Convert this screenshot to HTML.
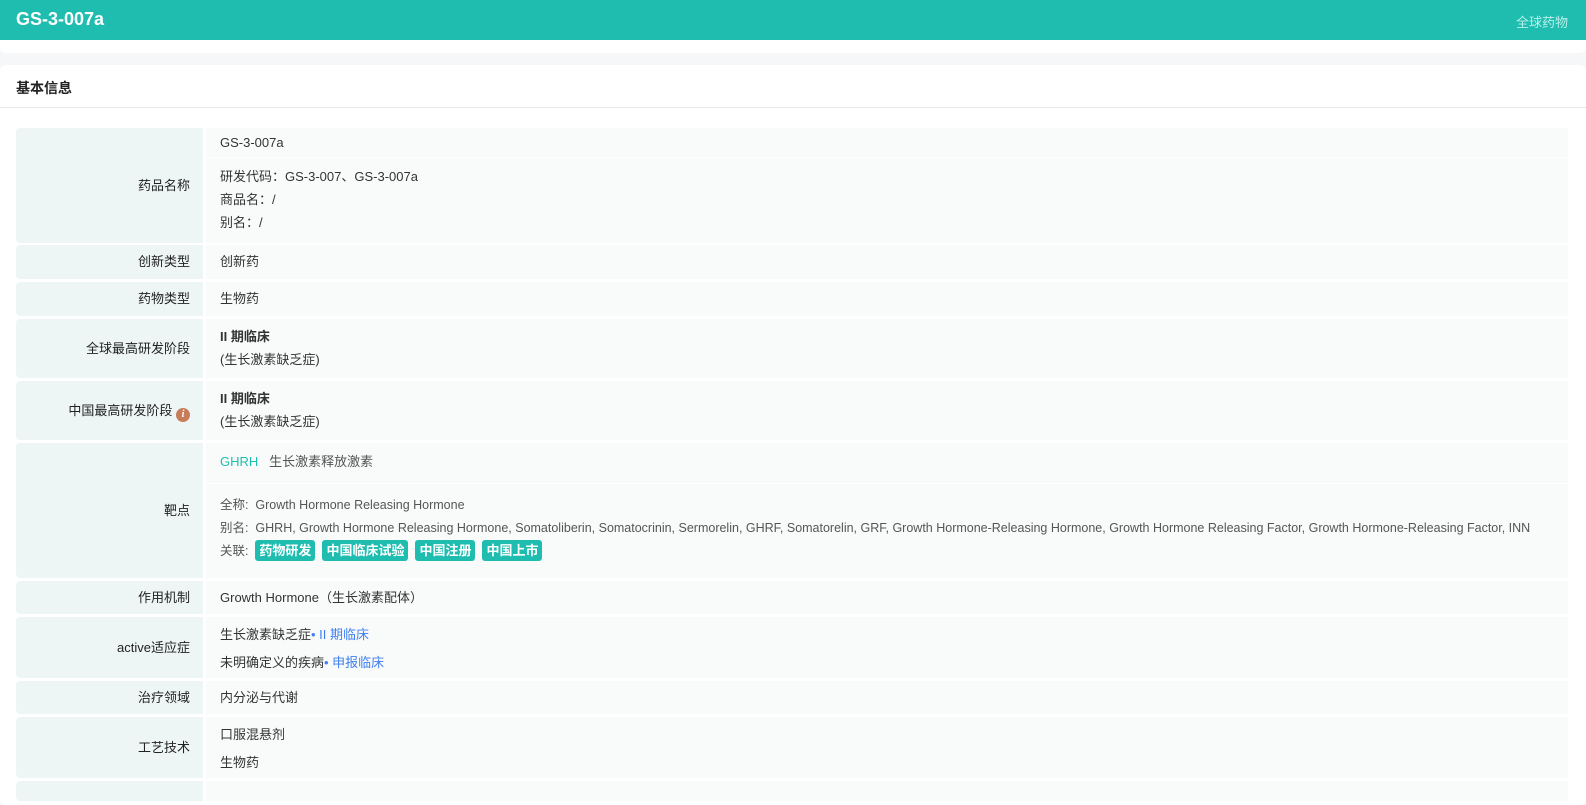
<!DOCTYPE html>
<html><head><meta charset="utf-8"><style>
*{margin:0;padding:0;box-sizing:border-box}
body{width:1586px;height:795px;overflow:hidden;background:#f6f7f9;font-family:"Liberation Sans","Noto Sans CJK SC",sans-serif;font-size:13px;color:#333;position:relative}
.hdr{position:absolute;left:0;top:0;width:1586px;height:40px;background:#1fbdb0;z-index:2}
.hdr .t{position:absolute;left:16px;top:9px;font-size:18px;font-weight:bold;color:#fff}
.hdr .r{position:absolute;left:1516px;top:12px;font-size:13px;color:#b6f0e8;white-space:nowrap}
.top{position:absolute;left:0;top:40px;width:1586px;height:13px;background:#fff;border-radius:0 0 6px 6px}
.card{position:absolute;left:0;top:65px;width:1586px;height:740px;background:#fff;border-radius:6px}
.ct{position:absolute;left:16px;top:78px;font-size:14px;font-weight:bold;color:#222}
.line{position:absolute;left:0;top:107px;width:1586px;height:1px;background:#e6e8ea}
.l{position:absolute;left:16px;width:187px;background:#eef6f5;border-radius:4px 0 0 4px;text-align:right;padding-right:13px;color:#222}
.v{position:absolute;left:206px;width:1362px;background:#f9fbfb;padding-left:14px;color:#333;white-space:nowrap}
.b{font-weight:bold}
.tag{display:inline-block;background:#1fbdb0;color:#fff;font-weight:bold;border-radius:3px;padding:0 4px;height:21px;line-height:21px;margin-right:7px;font-size:13px}
.blue{color:#3f7ff0}
.g{color:#555}
</style></head><body>
<div class="hdr"><div class="t">GS-3-007a</div><div class="r">全球药物</div></div>
<div class="top"></div>
<div class="card"></div>
<div class="ct">基本信息</div>
<div class="line"></div>

<div class="l" style="top:128px;height:115px;line-height:115px">药品名称</div>
<div class="v" style="top:128px;height:29px;line-height:29px">GS-3-007a</div>
<div class="v" style="top:158px;height:85px;padding-top:7px;line-height:23px">研发代码：GS-3-007、GS-3-007a<br>商品名：/<br>别名：/</div>

<div class="l" style="top:245px;height:34px;line-height:34px">创新类型</div>
<div class="v" style="top:245px;height:34px;line-height:34px">创新药</div>

<div class="l" style="top:282px;height:34px;line-height:34px">药物类型</div>
<div class="v" style="top:282px;height:34px;line-height:34px">生物药</div>

<div class="l" style="top:319px;height:59px;line-height:59px">全球最高研发阶段</div>
<div class="v" style="top:319px;height:59px;padding-top:6px;line-height:23px"><span class="b">II 期临床</span><br>(生长激素缺乏症)</div>

<div class="l" style="top:381px;height:59px;line-height:59px">中国最高研发阶段 <span style="display:inline-block;width:14px;height:14px;border-radius:7px;background:#c87d5a;color:#fff;font-size:10px;font-style:italic;font-weight:bold;line-height:14px;text-align:center;vertical-align:-2px;font-family:'Liberation Serif',serif">i</span></div>
<div class="v" style="top:381px;height:59px;padding-top:6px;line-height:23px"><span class="b">II 期临床</span><br>(生长激素缺乏症)</div>

<div class="l" style="top:443px;height:135px;line-height:135px">靶点</div>
<div class="v" style="top:443px;height:40px;line-height:38px"><span style="color:#1fbdb0">GHRH</span>&nbsp;&nbsp;&nbsp;<span class="g">生长激素释放激素</span></div>
<div class="v g" style="top:484px;height:94px;padding-top:10px;line-height:23px;font-size:12.5px">全称:&nbsp; Growth Hormone Releasing Hormone<br>别名:&nbsp; GHRH, Growth Hormone Releasing Hormone, Somatoliberin, Somatocrinin, Sermorelin, GHRF, Somatorelin, GRF, Growth Hormone-Releasing Hormone, Growth Hormone Releasing Factor, Growth Hormone-Releasing Factor, INN<br>关联:&nbsp; <span class="tag">药物研发</span><span class="tag">中国临床试验</span><span class="tag">中国注册</span><span class="tag">中国上市</span></div>

<div class="l" style="top:581px;height:33px;line-height:33px">作用机制</div>
<div class="v" style="top:581px;height:33px;line-height:33px">Growth Hormone（生长激素配体）</div>

<div class="l" style="top:617px;height:61px;line-height:61px">active适应症</div>
<div class="v" style="top:617px;height:61px;padding-top:4px;line-height:28px">生长激素缺乏症<span class="blue">• II 期临床</span><br>未明确定义的疾病<span class="blue">• 申报临床</span></div>

<div class="l" style="top:681px;height:33px;line-height:33px">治疗领域</div>
<div class="v" style="top:681px;height:33px;line-height:33px">内分泌与代谢</div>

<div class="l" style="top:717px;height:61px;line-height:61px">工艺技术</div>
<div class="v" style="top:717px;height:61px;padding-top:4px;line-height:28px">口服混悬剂<br>生物药</div>

<div class="l" style="top:781px;height:20px"></div>
<div class="v" style="top:781px;height:20px"></div>
</body></html>
